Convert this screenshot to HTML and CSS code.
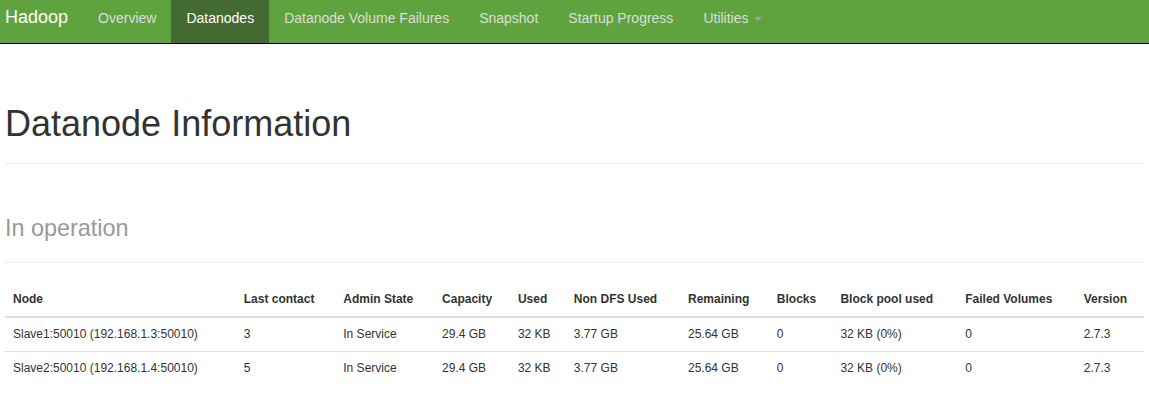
FILE: index.html
```html
<!DOCTYPE html>
<html>
<head>
<meta charset="utf-8">
<title>Datanode Information</title>
<link rel="stylesheet" href="styles.css">
</head>
<body>
<header class="navbar">
  <a class="brand" href="#">Hadoop</a>
  <ul class="nav">
    <li><a href="#">Overview</a></li>
    <li class="active"><a href="#">Datanodes</a></li>
    <li><a href="#">Datanode Volume Failures</a></li>
    <li><a href="#">Snapshot</a></li>
    <li><a href="#">Startup Progress</a></li>
    <li><a href="#">Utilities <span class="caret"></span></a></li>
  </ul>
</header>
<main class="container">
  <div class="page-header"><h1>Datanode Information</h1></div>
  <div class="page-header"><h1><small>In operation</small></h1></div>
  <table class="table">
    <thead>
      <tr>
        <th>Node</th>
        <th>Last contact</th>
        <th>Admin State</th>
        <th>Capacity</th>
        <th>Used</th>
        <th>Non DFS Used</th>
        <th>Remaining</th>
        <th>Blocks</th>
        <th>Block pool used</th>
        <th>Failed Volumes</th>
        <th>Version</th>
      </tr>
    </thead>
    <tbody>
      <tr>
        <td>Slave1:50010 (192.168.1.3:50010)</td>
        <td>3</td>
        <td>In Service</td>
        <td>29.4 GB</td>
        <td>32 KB</td>
        <td>3.77 GB</td>
        <td>25.64 GB</td>
        <td>0</td>
        <td>32 KB (0%)</td>
        <td>0</td>
        <td>2.7.3</td>
      </tr>
      <tr>
        <td>Slave2:50010 (192.168.1.4:50010)</td>
        <td>5</td>
        <td>In Service</td>
        <td>29.4 GB</td>
        <td>32 KB</td>
        <td>3.77 GB</td>
        <td>25.64 GB</td>
        <td>0</td>
        <td>32 KB (0%)</td>
        <td>0</td>
        <td>2.7.3</td>
      </tr>
    </tbody>
  </table>
</main>
</body>
</html>
```

FILE: styles.css
```css
* { box-sizing: border-box; }
html, body { margin: 0; padding: 0; }
body {
  font-family: "Liberation Sans", Arial, Helvetica, sans-serif;
  font-size: 14px;
  line-height: 1.42857143;
  color: #333;
  background: #fff;
}
a { text-decoration: none; }

.navbar {
  display: flex;
  align-items: stretch;
  height: 44px;
  background-color: #5fa33e;
  border-bottom: 1px solid #000;
}
.brand {
  display: block;
  padding: 7px 15px 0 5px;
  font-size: 18px;
  line-height: 20px;
  color: #fff;
}
.nav {
  display: flex;
  margin: 0;
  padding: 0;
  list-style: none;
}
.nav li a {
  display: block;
  height: 43px;
  padding: 8px 15px 15px;
  line-height: 20px;
  color: #ddd;
}
.nav li.active a {
  background-color: #446a34;
  color: #fff;
}
.caret {
  display: inline-block;
  width: 0;
  height: 0;
  margin-left: 2px;
  vertical-align: middle;
  border-top: 4px solid #a0a0a0;
  border-left: 4px solid transparent;
  border-right: 4px solid transparent;
}

.container {
  padding: 20px 5px 0;
}
.page-header {
  margin: 40px 0 20px;
  padding-bottom: 9px;
  border-bottom: 1px solid #eee;
}
.page-header h1 {
  margin: 20px 0 10px;
  font-size: 36px;
  font-weight: 500;
  line-height: 1.1;
}
.page-header:first-child h1 { margin-top: 0; }
.page-header h1 small {
  font-size: 65%;
  font-weight: normal;
  color: #999;
}

.table {
  width: 100%;
  margin-bottom: 20px;
  border-collapse: collapse;
  border-spacing: 0;
  font-size: 12px;
}
.table th,
.table td {
  padding: 8px;
  line-height: 1.42857143;
  text-align: left;
  vertical-align: top;
}
.table th {
  vertical-align: bottom;
  font-weight: bold;
  border-bottom: 2px solid #ddd;
}
.table td {
  border-top: 1px solid #ddd;
}
```
